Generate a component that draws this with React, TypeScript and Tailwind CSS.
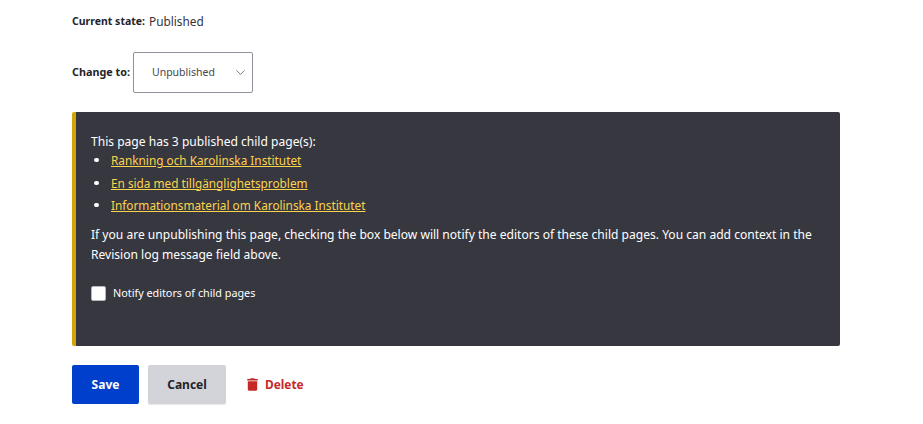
import { ChevronDown } from "lucide-react";

const children = [
  "Rankning och Karolinska Institutet",
  "En sida med tillgänglighetsproblem",
  "Informationsmaterial om Karolinska Institutet",
];

export default function App() {
  return (
    <div className="h-[424px] overflow-hidden bg-white px-[72px] pt-[13px] font-['Noto_Sans',sans-serif] text-[#23242a]">
      {/* Moderation state */}
      <div className="flex h-[18px] items-center gap-[4px]">
        <span className="text-[10.5px] font-bold">Current state:</span>
        <span className="text-[11.8px] text-[#33343a]">Published</span>
      </div>

      <div className="mt-[21px] flex items-center gap-[3px]">
        <label className="text-[10.8px] font-bold">Change to:</label>
        <div className="flex h-[41px] w-[120px] items-center justify-between rounded-[2px] border border-[#8e929c] pl-[18px] pr-[4px] text-[10.5px] text-[#45464c]">
          <span>Unpublished</span>
          <ChevronDown className="h-[15px] w-[15px] text-[#55565c]" strokeWidth={1.25} />
        </div>
      </div>

      {/* Warning box */}
      <div className="mt-[19px] h-[234px] w-[768px] rounded-[2px] border-l-[4px] border-[#d4a50b] bg-[#373740] pl-[15px] pr-[20px] pt-[21px] text-[12.07px] leading-[18px] text-white">
        <p>This page has 3 published child page(s):</p>
        <ul>
          {children.map((name) => (
            <li key={name} className="mb-[4.5px] flex items-center gap-[12px] pl-[3px] last:mb-[5px]">
              <span className="h-[4px] w-[5px] rounded-full bg-white" />
              <a href="#" className="text-[11.8px] text-[#fcd34d] underline">{name}</a>
            </li>
          ))}
        </ul>
        <p className="mt-[11px] leading-[20px]">
          If you are unpublishing this page, checking the box below will notify the editors of these child pages. You can add context in the Revision log message field above.
        </p>
        <label className="mt-[19px] flex items-center gap-[7px] text-[10.8px]">
          <span className="h-[15px] w-[15px] rounded-[2px] border border-[#b4b6bc] bg-white" />
          Notify editors of child pages
        </label>
      </div>

      {/* Actions */}
      <div className="mt-[19px] flex items-center">
        <button className="h-[39px] w-[67px] rounded-[2px] bg-[#003ecc] text-[12px] font-bold text-white">Save</button>
        <button className="ml-[9px] h-[39px] w-[78px] rounded-[2px] bg-[#d3d4d9] text-[12px] font-bold text-[#23242a] shadow-[0_1px_1px_rgba(0,0,0,0.1)]">Cancel</button>
        <button className="ml-[21px] flex items-center gap-[7px] text-[11.9px] font-bold text-[#c62828]">
          <svg viewBox="0 0 448 512" className="h-[13px] w-[11px] fill-[#c62828]">
            <path d="M135 18C140 7 151 0 163 0h122c12 0 23 7 28 18l7 14h96c18 0 32 14 32 32s-14 32-32 32H32C14 96 0 82 0 64s14-32 32-32h96l7-14zM32 128h384v320c0 35-29 64-64 64H96c-35 0-64-29-64-64V128z" />
          </svg>
          Delete
        </button>
      </div>
    </div>
  );
}
